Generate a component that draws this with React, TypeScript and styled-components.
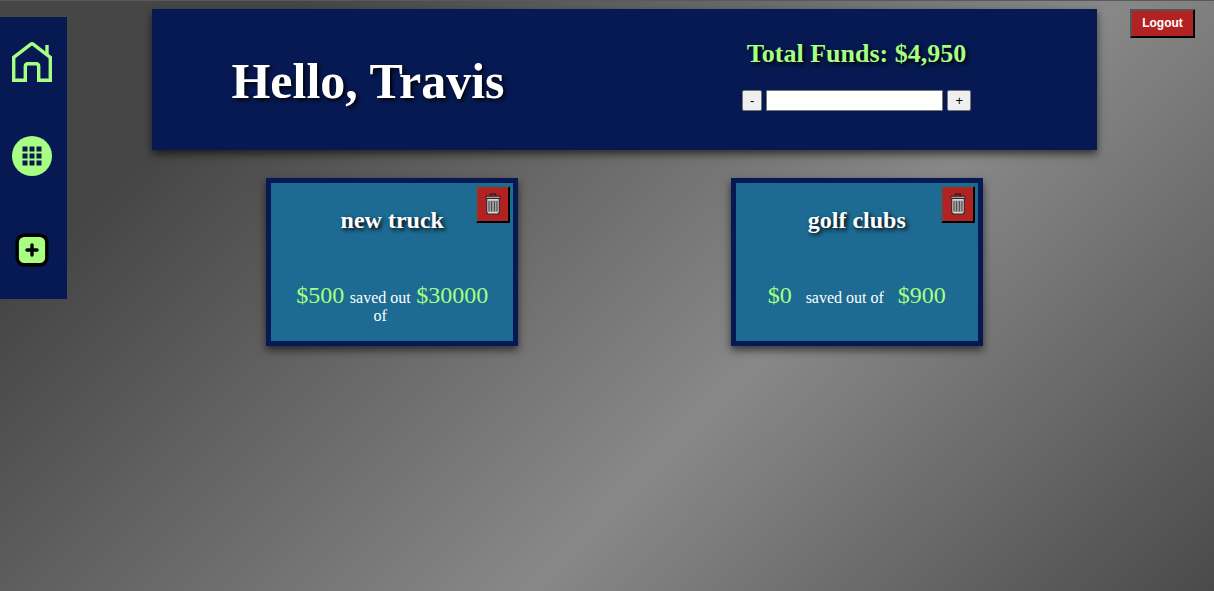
import React from "react";
import styled, { createGlobalStyle } from "styled-components";

const navy = "#071952";
const green = "#a6ff82";

const GlobalStyle = createGlobalStyle`
  * { box-sizing: border-box; }
  html { min-height: 100%; }
  body {
    margin: 0;
    min-height: 100vh;
    font-family: "Liberation Serif", "Times New Roman", serif;
    color: #fff;
    background: linear-gradient(135deg, #464646 17%, #888888 62%, #4a4a4a 100%) no-repeat fixed;
    border-top: 1px solid #5a5a5a;
  }
`;

const Page = styled.div`
  display: grid;
  grid-template-columns: 67px minmax(0, 1fr) 65px;
  align-items: start;
  padding-right: 19px;
`;

const Sidebar = styled.nav`
  display: flex;
  flex-direction: column;
  align-items: center;
  gap: 54px;
  margin-top: 16px;
  padding: 25px 3px 29px 0;
  background: ${navy};
`;

const NavLink = styled.a`
  display: flex;
  width: 40px;
  height: 40px;
`;

const Main = styled.main`
  padding: 8px 33px 0 85px;
`;

const Header = styled.header`
  display: grid;
  grid-template-columns: minmax(0, 432fr) minmax(0, 513fr);
  min-height: 141px;
  background: ${navy};
  box-shadow: 0 4px 8px rgba(0, 0, 0, 0.6);
`;

const Greeting = styled.h1`
  margin: 0;
  padding-top: 2px;
  align-self: center;
  text-align: center;
  font-size: 50px;
  line-height: 58px;
  text-shadow: 2px 2px 4px #000;
`;

const Funds = styled.section`
  display: flex;
  flex-direction: column;
  align-items: center;
  gap: 21px;
  padding: 30px 0 0 32px;
`;

const FundsTotal = styled.h2`
  margin: 0;
  font-size: 26px;
  line-height: 30px;
  color: ${green};
  text-shadow: 2px 2px 4px #000;
`;

const FundsForm = styled.form`
  display: flex;
  gap: 4px;
`;

const StepButton = styled.button`
  height: 21px;
  padding: 1px 7px;
  border: 1px solid #767676;
  border-radius: 2px;
  background: #efefef;
  color: #000;
  font: 13px/15px "Liberation Sans", Arial, sans-serif;
`;

const AmountInput = styled.input`
  width: 177px;
  height: 21px;
  border: 1px solid #767676;
  border-radius: 1px;
  background: #fff;
  font: 13px/15px "Liberation Sans", Arial, sans-serif;
`;

const DangerButton = styled.button`
  border: 2px outset #000;
  background: #b22222;
  color: #fff;
`;

const LogoutButton = styled(DangerButton)`
  height: 29px;
  margin-top: 8px;
  padding: 0;
  font: bold 12px/15px "Liberation Sans", Arial, sans-serif;
`;

const Goals = styled.section`
  display: flex;
  justify-content: space-around;
  margin-top: 28px;
  padding: 0 8px;
`;

const Card = styled.article`
  position: relative;
  width: 252px;
  min-height: 168px;
  padding: 24px 25px 14px;
  border: 5px solid ${navy};
  background: #1d6b93;
  box-shadow: 0 4px 8px rgba(0, 0, 0, 0.6);
`;

const CardTitle = styled.h2`
  margin: 0;
  text-align: center;
  font-size: 24px;
  line-height: 26px;
  text-shadow: 2px 2px 4px #000;
`;

const DeleteButton = styled(DangerButton)`
  position: absolute;
  top: 3px;
  right: 3px;
  display: flex;
  align-items: center;
  justify-content: center;
  width: 34px;
  height: 37px;
  padding: 0 0 2px;
`;

const Progress = styled.div`
  display: flex;
  justify-content: space-around;
  align-items: baseline;
  margin-top: 49px;
`;

const Money = styled.span`
  font-size: 24px;
  line-height: 27px;
  color: ${green};
`;

const ProgressText = styled.span`
  font-size: 16px;
  line-height: 18px;
  text-align: center;
`;

const HomeIcon = () => (
  <svg width="40" height="40" viewBox="0 0 40 40" fill="none" stroke={green} strokeWidth="3.4" aria-hidden="true">
    <path d="M1.7 38.3V15.4L18.6 2.3Q20 1.2 21.4 2.3L38.3 15.4V38.3H26.7V24.5Q26.7 21.7 24 21.7H16Q13.3 21.7 13.3 24.5V38.3Z" />
    <path d="M35 13V3" />
  </svg>
);

const GridIcon = () => (
  <svg width="40" height="40" viewBox="0 0 40 40" aria-hidden="true">
    <circle cx="20" cy="20" r="20" fill={green} />
    {[10.5, 17.5, 24.5].map((y) =>
      [10.5, 17.5, 24.5].map((x) => <rect key={`${x}-${y}`} x={x} y={y} width="5" height="5" fill={navy} />)
    )}
  </svg>
);

const AddIcon = () => (
  <svg width="40" height="40" viewBox="0 0 40 40" stroke="#000" strokeWidth="3.4" strokeLinecap="round" aria-hidden="true">
    <rect x="5.2" y="5.2" width="29.6" height="29.6" rx="7" fill={green} />
    <path d="M20 15V25M15 20H25" />
  </svg>
);

const TrashIcon = () => (
  <svg width="16" height="22" viewBox="0 0 16 22" aria-hidden="true">
    <path d="M5.5 3.5V1H10.5V3.5" fill="none" stroke="#4a1717" strokeWidth="1.3" />
    <path d="M1.7 5H14.3V19.5L12.8 21.2H3.2L1.7 19.5Z" fill="#d6d6d6" stroke="#3c2424" strokeWidth="1.2" />
    <rect x="3.5" y="7.5" width="9" height="11.5" fill="#a4a4a4" />
    <rect x=".6" y="3.2" width="14.8" height="2.2" rx="1" fill="#c9c9c9" stroke="#3a2020" strokeWidth="1.2" />
    <path d="M4 8V18.5M6.6 8V18.5M9.4 8V18.5M12 8V18.5" stroke="#4b4b4b" strokeWidth="1.1" />
  </svg>
);

const goals = [
  { name: "new truck", saved: 500, target: 30000 },
  { name: "golf clubs", saved: 0, target: 900 },
];

export default function App() {
  return (
    <>
      <GlobalStyle />
      <Page>
        <Sidebar>
          <NavLink href="#home" aria-label="Home"><HomeIcon /></NavLink>
          <NavLink href="#goals" aria-label="Goals"><GridIcon /></NavLink>
          <NavLink href="#add" aria-label="Add goal"><AddIcon /></NavLink>
        </Sidebar>
        <Main>
          <Header>
            <Greeting>Hello, Travis</Greeting>
            <Funds>
              <FundsTotal>Total Funds: $4,950</FundsTotal>
              <FundsForm>
                <StepButton type="button">-</StepButton>
                <AmountInput type="text" aria-label="Amount" />
                <StepButton type="button">+</StepButton>
              </FundsForm>
            </Funds>
          </Header>
          <Goals>
            {goals.map((goal) => (
              <Card key={goal.name}>
                <CardTitle>{goal.name}</CardTitle>
                <DeleteButton type="button" aria-label={`Delete ${goal.name}`}><TrashIcon /></DeleteButton>
                <Progress>
                  <Money>${goal.saved}</Money>
                  <ProgressText>saved out of</ProgressText>
                  <Money>${goal.target}</Money>
                </Progress>
              </Card>
            ))}
          </Goals>
        </Main>
        <LogoutButton type="button">Logout</LogoutButton>
      </Page>
    </>
  );
}
